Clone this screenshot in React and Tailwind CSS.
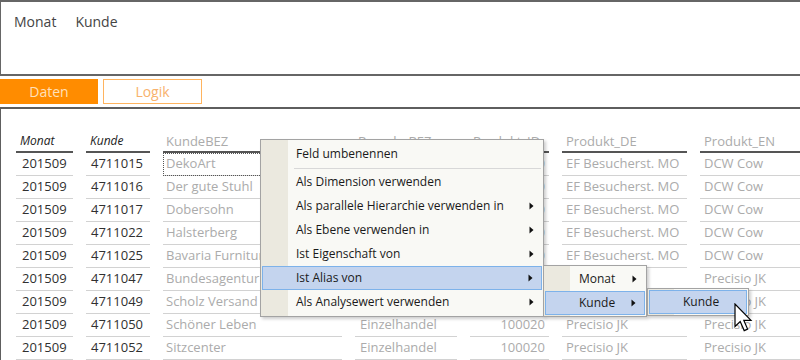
import React from "react";

const rows = [
  ["201509", "4711015", "DekoArt", "Einzelhandel", "100020", "EF Besucherst. MO", "DCW Cow"],
  ["201509", "4711016", "Der gute Stuhl", "Einzelhandel", "100010", "EF Besucherst. MO", "DCW Cow"],
  ["201509", "4711017", "Dobersohn", "Einzelhandel", "100010", "EF Besucherst. MO", "DCW Cow"],
  ["201509", "4711022", "Halsterberg", "Einzelhandel", "100010", "EF Besucherst. MO", "DCW Cow"],
  ["201509", "4711025", "Bavaria Furniture", "Einzelhandel", "100010", "EF Besucherst. MO", "DCW Cow"],
  ["201509", "4711047", "Bundesagentur für Arbeit", "Behörde", "100020", "Precisio JK", "Precisio JK"],
  ["201509", "4711049", "Scholz Versand", "Versandhandel", "100020", "Precisio JK", "Precisio JK"],
  ["201509", "4711050", "Schöner Leben", "Einzelhandel", "100020", "Precisio JK", "Precisio JK"],
  ["201509", "4711052", "Sitzcenter", "Einzelhandel", "100020", "Precisio JK", "Precisio JK"],
];

const widths = [
  "shrink-0 w-[57px]",
  "shrink-0 w-[64px]",
  "shrink-0 w-[179px]",
  "shrink-0 w-[102px]",
  "shrink-0 w-[79px]",
  "shrink-0 w-[125px]",
  "shrink-0 w-[120px]",
];

function Arrow() {
  return (
    <svg width="5" height="8" viewBox="0 0 5 8" className="shrink-0">
      <path d="M0.5 0.5L4.5 4L0.5 7.5Z" fill="#111" />
    </svg>
  );
}

function MenuItem({ label, arrow, active }) {
  return (
    <div
      className={
        "mx-[1px] h-[24px] flex items-center justify-between pr-[8px] text-[12px] text-[#1a1a1a] " +
        (active ? "border border-[#7db2ea] bg-[#c4d4ee] pl-[33px]" : "pl-[34px]")
      }
    >
      <span>{label}</span>
      {arrow ? <Arrow /> : null}
    </div>
  );
}

export default function App() {
  return (
    <div className="relative w-[800px] h-[360px] overflow-hidden bg-white font-['Open_Sans','Noto_Sans',sans-serif]">
      {/* top drop area */}
      <div className="h-[76px] border-t-2 border-b-2 border-l border-[#666] pl-[13px] pt-[10px] flex gap-[19px] text-[14px] leading-[20px] text-[#444]">
        <span>Monat</span>
        <span>Kunde</span>
      </div>

      {/* tabs */}
      <div className="mt-[3px] h-[25px] flex gap-[5px] text-[14px]">
        <div className="w-[98px] bg-[#ff8c00] text-[#ffe0ba] flex items-center justify-center">Daten</div>
        <div className="w-[99px] border border-[#ffb45f] text-[#f8b26c] flex items-center justify-center">Logik</div>
      </div>

      {/* data panel */}
      <div className="mt-[3px] h-[260px] border-t-2 border-l border-[#5e5e5e] pl-[15px] overflow-hidden">
        {/* header */}
        <div className="flex gap-[13px] text-[13px]">
          <div className={widths[0] + " h-[44px] border-b-2 border-[#555] flex items-end pl-[4px] pb-[1px] leading-[18px] italic text-[12px] text-[#222]"}>Monat</div>
          <div className={widths[1] + " h-[44px] border-b-2 border-[#555] flex items-end pl-[4px] pb-[1px] leading-[18px] italic text-[12px] text-[#222]"}>Kunde</div>
          <div className={widths[2] + " h-[44px] border-b-2 border-[#555] flex items-end pl-[3px] pb-[1px] leading-[18px] text-[#ababab]"}>KundeBEZ</div>
          <div className={widths[3] + " h-[44px] border-b-2 border-[#555] flex items-end pl-[3px] pb-[1px] leading-[18px] text-[#ababab]"}>BrancheBEZ</div>
          <div className={widths[4] + " h-[44px] border-b-2 border-[#555] flex items-end pl-[3px] pb-[1px] leading-[18px] text-[#ababab]"}>Produkt_ID</div>
          <div className={widths[5] + " h-[44px] border-b-2 border-[#555] flex items-end pl-[4px] pb-[1px] leading-[18px] text-[#ababab]"}>Produkt_DE</div>
          <div className={widths[6] + " h-[44px] border-b-2 border-[#555] flex items-end pl-[4px] pb-[1px] leading-[18px] text-[#ababab]"}>Produkt_EN</div>
        </div>
        {rows.map((r, i) => (
          <div key={i} className="flex gap-[13px] text-[13px]">
            <div className={widths[0] + " h-[23px] border-b border-[#d2d2d2] flex items-center pl-[6px] text-[#303030]"}>{r[0]}</div>
            <div className={widths[1] + " h-[23px] border-b border-[#d2d2d2] flex items-center pl-[5px] text-[#303030]"}>{r[1]}</div>
            <div
              className={
                widths[2] +
                " h-[23px] border-b border-[#d2d2d2] flex items-center pl-[3px] text-[#ababab] whitespace-nowrap overflow-hidden" +
                (i === 0 ? " outline outline-1 outline-dotted outline-[#555] -outline-offset-1" : "")
              }
            >
              {r[2]}
            </div>
            <div className={widths[3] + " h-[23px] border-b border-[#d2d2d2] flex items-center pl-[5px] text-[#ababab]"}>{r[3]}</div>
            <div className={widths[4] + " h-[23px] border-b border-[#d2d2d2] flex items-center justify-end pr-[4px] text-[#ababab]"}>{r[4]}</div>
            <div className={widths[5] + " h-[23px] border-b border-[#d2d2d2] flex items-center pl-[4px] text-[#ababab] whitespace-nowrap"}>{r[5]}</div>
            <div className={widths[6] + " h-[23px] border-b border-[#d2d2d2] flex items-center pl-[4px] text-[#ababab] whitespace-nowrap"}>{r[6]}</div>
          </div>
        ))}
      </div>

      {/* context menu */}
      <div className="absolute left-[260px] top-[139px] w-[284px] border border-[#a3a3a3] pt-[2px] pb-[2px] bg-[linear-gradient(to_right,#ebe9df_27px,#f9f9f5_27px)] shadow-[2px_2px_3px_rgba(0,0,0,0.2)]">
        <MenuItem label="Feld umbenennen" />
        <div className="h-[4px] flex items-center">
          <div className="ml-[33px] mr-[2px] flex-1 h-px bg-[#d8d8d8]" />
        </div>
        <MenuItem label="Als Dimension verwenden" />
        <MenuItem label="Als parallele Hierarchie verwenden in" arrow />
        <MenuItem label="Als Ebene verwenden in" arrow />
        <MenuItem label="Ist Eigenschaft von" arrow />
        <MenuItem label="Ist Alias von" arrow active />
        <MenuItem label="Als Analysewert verwenden" arrow />
      </div>

      {/* submenu 1 */}
      <div className="absolute left-[543px] top-[265px] w-[104px] border border-[#a3a3a3] pt-[1px] pb-[1px] bg-[linear-gradient(to_right,#ebe9df_26px,#f9f9f5_26px)] shadow-[2px_2px_3px_rgba(0,0,0,0.2)]">
        <MenuItem label="Monat" arrow />
        <MenuItem label="Kunde" arrow active />
      </div>

      {/* submenu 2 */}
      <div className="absolute left-[647px] top-[288px] w-[102px] border border-[#a3a3a3] pt-[1px] pb-[1px] bg-[linear-gradient(to_right,#ebe9df_26px,#f9f9f5_26px)] shadow-[2px_2px_3px_rgba(0,0,0,0.2)]">
        <MenuItem label="Kunde" active />
      </div>

      {/* mouse cursor */}
      <svg className="absolute left-[734px] top-[303px]" width="19" height="30" viewBox="0 0 19 30">
        <path
          d="M1 1L1 23.5L6.2 18.6L10.2 27.6L13.6 26.1L9.8 17.3L17 17.3Z"
          fill="#fff"
          stroke="#000"
          strokeWidth="1.2"
          strokeLinejoin="miter"
        />
      </svg>
    </div>
  );
}
